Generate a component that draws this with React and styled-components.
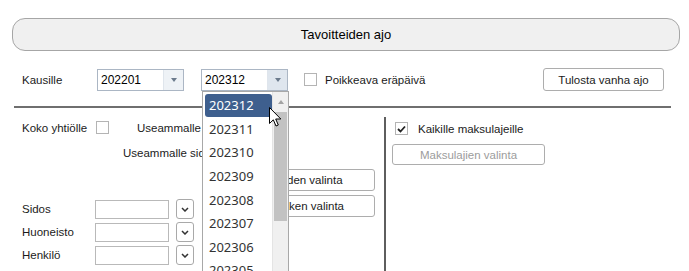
import React from "react";
import styled, { createGlobalStyle } from "styled-components";

const GlobalStyle = createGlobalStyle`
  body {
    margin: 0;
    background: #fff;
    font-family: "Liberation Sans", Arial, sans-serif;
    font-size: 11.5px;
    color: #1b1b1b;
  }
`;

const Page = styled.div`
  position: relative;
  width: 689px;
  height: 271px;
  overflow: hidden;
  box-sizing: border-box;
  padding: 18px 9px 0 12px;
`;

const TitleBar = styled.div`
  height: 33px;
  box-sizing: border-box;
  border: 1px solid #a6a6a6;
  border-radius: 13px;
  background: #f0f0f0;
  display: flex;
  align-items: center;
  justify-content: center;
  font-size: 13px;
  color: #000;
`;

const TopRow = styled.div`
  display: flex;
  align-items: center;
  height: 23px;
  margin-top: 17px;
  padding-left: 10px;
  padding-right: 16px;
`;

const Label = styled.span`
  width: ${(p) => p.$w || "auto"};
  margin-left: ${(p) => p.$ml || "0"};
  flex: none;
  white-space: nowrap;
`;

const ComboWrap = styled.div`
  position: relative;
  margin-left: ${(p) => p.$ml || "0"};
`;

const Combo = styled.div`
  display: flex;
  width: 87px;
  height: 22px;
  box-sizing: border-box;
  border: 1px solid #abb6c4;
  background: #fff;
  font-size: 12px;
  color: #000;
`;

const ComboValue = styled.div`
  flex: 1;
  display: flex;
  align-items: center;
  padding-left: 3px;
`;

const ComboArrow = styled.div`
  width: 19px;
  display: flex;
  align-items: center;
  justify-content: center;
  border-left: 1px solid #dfe5ec;
  background: ${(p) => (p.$hover ? "#dfe6ee" : "#eef2f6")};
  &::after {
    content: "";
    border-left: 3.5px solid transparent;
    border-right: 3.5px solid transparent;
    border-top: 4px solid #6b7a8c;
  }
`;

const CheckLabel = styled.label`
  display: flex;
  align-items: center;
  gap: ${(p) => p.$gap || "8px"};
  margin-left: ${(p) => p.$ml || "0"};
  white-space: nowrap;
`;

const Box = styled.span`
  width: 13px;
  height: 13px;
  box-sizing: border-box;
  border: 1px solid #b4b4b4;
  background: #fff;
  display: flex;
  align-items: center;
  justify-content: center;
  flex: none;
`;

const Button = styled.button`
  width: ${(p) => p.$w};
  height: ${(p) => p.$h || "22px"};
  margin-left: ${(p) => p.$ml || "0"};
  box-sizing: border-box;
  border: 1px solid #adadad;
  border-radius: 3px;
  background: #fff;
  font-family: inherit;
  font-size: 11.5px;
  color: ${(p) => (p.disabled ? "#9c9c9c" : "#1b1b1b")};
  padding: 0;
  flex: none;
`;

const Rule = styled.div`
  height: 2px;
  background: #6f6f6f;
  margin: 15px 9px 0 2px;
`;

const Body = styled.div`
  display: flex;
  height: 165px;
`;

const LeftCol = styled.div`
  width: 372px;
  box-sizing: border-box;
  padding: 13px 0 0 10px;
`;

const Divider = styled.div`
  width: 2px;
  margin-top: 9px;
  background: #5e5e5e;
`;

const RightCol = styled.div`
  padding: 14px 0 0 6px;
  display: flex;
  flex-direction: column;
  gap: 9px;
`;

const Row = styled.div`
  display: flex;
  align-items: center;
  height: 13px;
  margin-top: ${(p) => p.$mt || "0"};
  padding-left: ${(p) => p.$pl || "0"};
`;

const Lower = styled.div`
  display: flex;
  align-items: flex-start;
`;

const FieldGrid = styled.div`
  margin-top: 40px;
  display: grid;
  grid-template-columns: 73px 81px 18px;
  row-gap: 3px;
  align-items: center;
`;

const Field = styled.div`
  width: 74px;
  height: 19px;
  box-sizing: border-box;
  border: 1px solid #b9b9b9;
  background: #fff;
`;

const SmallDrop = styled.div`
  width: 18px;
  height: 20px;
  box-sizing: border-box;
  border: 1px solid #a9a9a9;
  border-radius: 3px;
  background: #fff;
  display: flex;
  align-items: center;
  justify-content: center;
`;

const ButtonStack = styled.div`
  margin: 10px 0 0 28px;
  display: flex;
  flex-direction: column;
  gap: 4px;
`;

const DropList = styled.div`
  position: absolute;
  top: 100%;
  left: 1px;
  width: 87px;
  height: 190px;
  box-sizing: border-box;
  border: 1px solid #a8a8a8;
  background: #fff;
  display: flex;
  z-index: 5;
`;

const Items = styled.div`
  flex: 1;
  padding: 2px 0 0 2px;
`;

const Item = styled.div`
  height: 23.6px;
  display: flex;
  align-items: center;
  padding-left: 4px;
  border-radius: 3px;
  font-family: "Noto Sans", "Open Sans", sans-serif;
  font-size: 13px;
  color: ${(p) => (p.$sel ? "#fff" : "#333")};
  background: ${(p) => (p.$sel ? "#3e5f8e" : "transparent")};
`;

const ScrollBar = styled.div`
  width: 15px;
  background: #f0f0f0;
  border-left: 1px solid #e4e4e4;
  display: flex;
  flex-direction: column;
  align-items: center;
`;

const ScrollUp = styled.div`
  height: 20px;
  display: flex;
  align-items: center;
  justify-content: center;
  &::after {
    content: "";
    border-left: 3.5px solid transparent;
    border-right: 3.5px solid transparent;
    border-bottom: 4px solid #a3a3a3;
  }
`;

const Thumb = styled.div`
  width: 13px;
  height: 109px;
  background: #c2c2c2;
`;

const Cursor = styled.svg`
  position: absolute;
  left: 66px;
  top: 15px;
  z-index: 6;
`;

const Check = () => (
  <svg width="9" height="8" viewBox="0 0 9 8">
    <path d="M1 4 L3.5 6.5 L8 1.5" fill="none" stroke="#222" strokeWidth="1.8" />
  </svg>
);

const Chevron = () => (
  <svg width="8" height="5" viewBox="0 0 8 5">
    <path d="M1 1 L4 4 L7 1" fill="none" stroke="#333" strokeWidth="1.5" />
  </svg>
);

const periods = ["202312", "202311", "202310", "202309", "202308", "202307", "202306", "202305"];
const fields = ["Sidos", "Huoneisto", "Henkilö"];

const App = () => {
  return (
    <Page>
      <GlobalStyle />
      <TitleBar>Tavoitteiden ajo</TitleBar>

      <TopRow>
        <Label $w="75px">Kausille</Label>
        <ComboWrap>
          <Combo>
            <ComboValue>202201</ComboValue>
            <ComboArrow />
          </Combo>
        </ComboWrap>
        <ComboWrap $ml="17px">
          <Combo>
            <ComboValue>202312</ComboValue>
            <ComboArrow $hover />
          </Combo>
          <DropList>
            <Items>
              {periods.map((p, i) => (
                <Item key={p} $sel={i === 0}>
                  {p}
                </Item>
              ))}
            </Items>
            <ScrollBar>
              <ScrollUp />
              <Thumb />
            </ScrollBar>
            <Cursor width="13" height="21" viewBox="0 0 13 21">
              <path
                d="M0.5 0.5 L0.5 16.5 L4.3 12.8 L7 19 L9.3 18 L6.7 12 L11.8 12 Z"
                fill="#fff"
                stroke="#000"
                strokeWidth="1"
              />
            </Cursor>
          </DropList>
        </ComboWrap>
        <CheckLabel $ml="16px">
          <Box />
          Poikkeava eräpäivä
        </CheckLabel>
        <Button $w="121px" $h="23px" $ml="auto">
          Tulosta vanha ajo
        </Button>
      </TopRow>

      <Rule />

      <Body>
        <LeftCol>
          <Row>
            <Label $w="74px">Koko yhtiölle</Label>
            <Box />
            <Label $ml="28px">Useammalle huoneistolle</Label>
          </Row>
          <Row $mt="12px" $pl="101px">
            <Label>Useammalle sidokselle</Label>
          </Row>
          <Lower>
            <FieldGrid>
              {fields.map((f) => (
                <React.Fragment key={f}>
                  <Label>{f}</Label>
                  <Field />
                  <SmallDrop>
                    <Chevron />
                  </SmallDrop>
                </React.Fragment>
              ))}
            </FieldGrid>
            <ButtonStack>
              <Button $w="153px">Kohteiden valinta</Button>
              <Button $w="153px">Vuokraken valinta</Button>
            </ButtonStack>
          </Lower>
        </LeftCol>
        <Divider />
        <RightCol>
          <CheckLabel $gap="10px" $ml="3px">
            <Box>
              <Check />
            </Box>
            Kaikille maksulajeille
          </CheckLabel>
          <Button $w="153px" $h="21px" disabled>
            Maksulajien valinta
          </Button>
        </RightCol>
      </Body>
    </Page>
  );
};

export default App;
